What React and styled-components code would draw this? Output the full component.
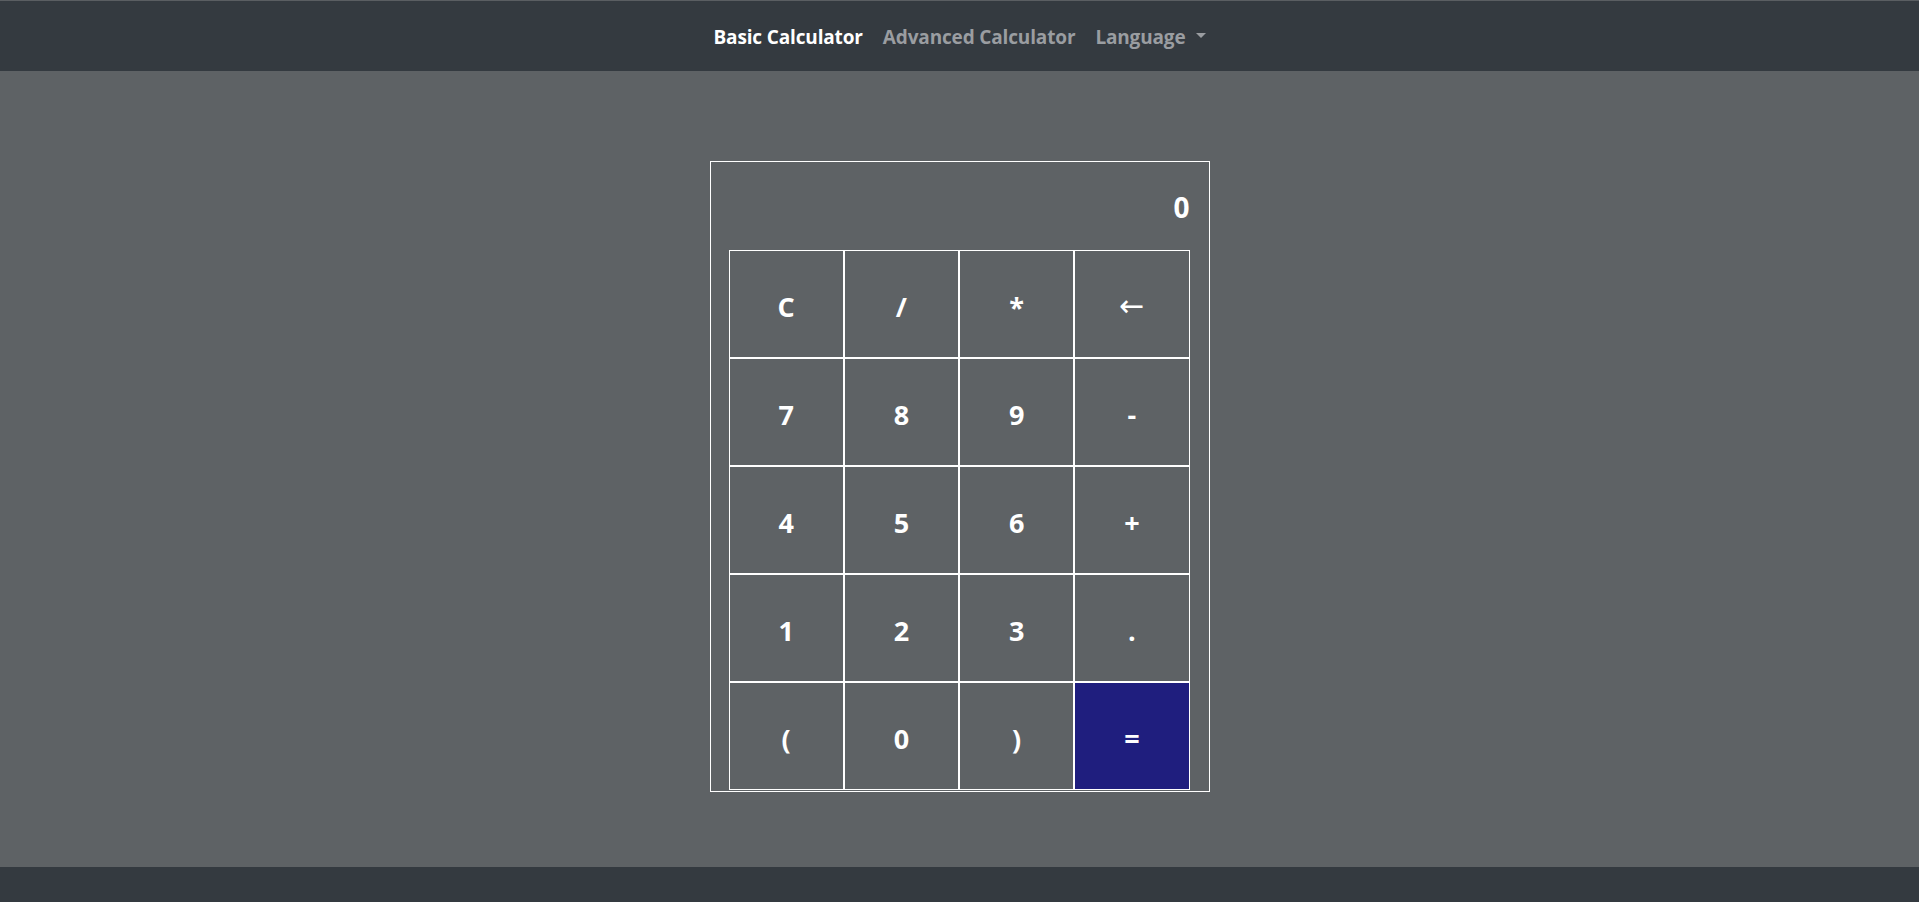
import React from "react";
import styled, { createGlobalStyle } from "styled-components";

const Global = createGlobalStyle`
  html, body { margin: 0; padding: 0; background: #5e6265; }
  body { font-family: "Open Sans", "Noto Sans", sans-serif; }
  * { box-sizing: border-box; }
`;

const Page = styled.div`
  min-height: 902px;
  display: flex;
  flex-direction: column;
  background: #5e6265;
`;

const NavBar = styled.nav`
  height: 71px;
  background: #343a40;
  border-top: 1px solid #5a5e62;
  display: flex;
  align-items: center;
  justify-content: center;
  padding-top: 2px;
`;

const NavList = styled.div`
  display: flex;
  align-items: center;
`;

const NavLink = styled.a`
  padding: 8px 10px;
  font-size: 19px;
  font-weight: 700;
  letter-spacing: -0.15px;
  color: ${(p) => (p.$active ? "#ffffff" : "#9a9da1")};
  text-decoration: none;
  display: flex;
  align-items: center;
  cursor: pointer;
`;

const Caret = styled.span`
  display: inline-block;
  margin-left: 10px;
  width: 0;
  height: 0;
  border-left: 5px solid transparent;
  border-right: 5px solid transparent;
  border-top: 5px solid #9a9da1;
  transform: translateY(-2px);
`;

const Main = styled.main`
  flex: 1;
  display: flex;
  justify-content: center;
  align-items: flex-start;
  padding-top: 90px;
`;

const CalcBox = styled.div`
  width: 500px;
  height: 631px;
  border: 1px solid #ffffff;
  padding: 0 19px 0 18px;
  display: flex;
  flex-direction: column;
`;

const Display = styled.div`
  height: 88px;
  display: flex;
  align-items: center;
  justify-content: flex-end;
  color: #ffffff;
  font-size: 28px;
  font-weight: 700;
  padding-top: 2px;
`;

const Keypad = styled.div`
  display: grid;
  grid-template-columns: repeat(4, 1fr);
  grid-auto-rows: 108px;
`;

const Key = styled.button`
  border: 1px solid #ffffff;
  background: ${(p) => (p.$primary ? "#1f1e7e" : "transparent")};
  color: #ffffff;
  font-family: "Open Sans", "Noto Sans", sans-serif;
  font-size: 27px;
  font-weight: 700;
  padding: 4px 0 0 0;
  margin: 0;
  border-radius: 0;
  cursor: pointer;
  display: flex;
  align-items: center;
  justify-content: center;
`;

const Arrow = styled.span`
  font-family: "DejaVu Sans", sans-serif;
  font-weight: 400;
  font-size: 30px;
  line-height: 1;
  transform: translateY(0px);
`;

const Footer = styled.footer`
  height: 35px;
  background: #343a40;
`;

const keys = [
  "C", "/", "*", "←",
  "7", "8", "9", "-",
  "4", "5", "6", "+",
  "1", "2", "3", ".",
  "(", "0", ")", "=",
];

export default function App() {
  return (
    <Page>
      <Global />
      <NavBar>
        <NavList>
          <NavLink $active>Basic Calculator</NavLink>
          <NavLink>Advanced Calculator</NavLink>
          <NavLink>
            Language
            <Caret />
          </NavLink>
        </NavList>
      </NavBar>
      <Main>
        <CalcBox>
          <Display>0</Display>
          <Keypad>
            {keys.map((k) => (
              <Key key={k} $primary={k === "="}>
                {k === "←" ? <Arrow>←</Arrow> : k}
              </Key>
            ))}
          </Keypad>
        </CalcBox>
      </Main>
      <Footer />
    </Page>
  );
}
